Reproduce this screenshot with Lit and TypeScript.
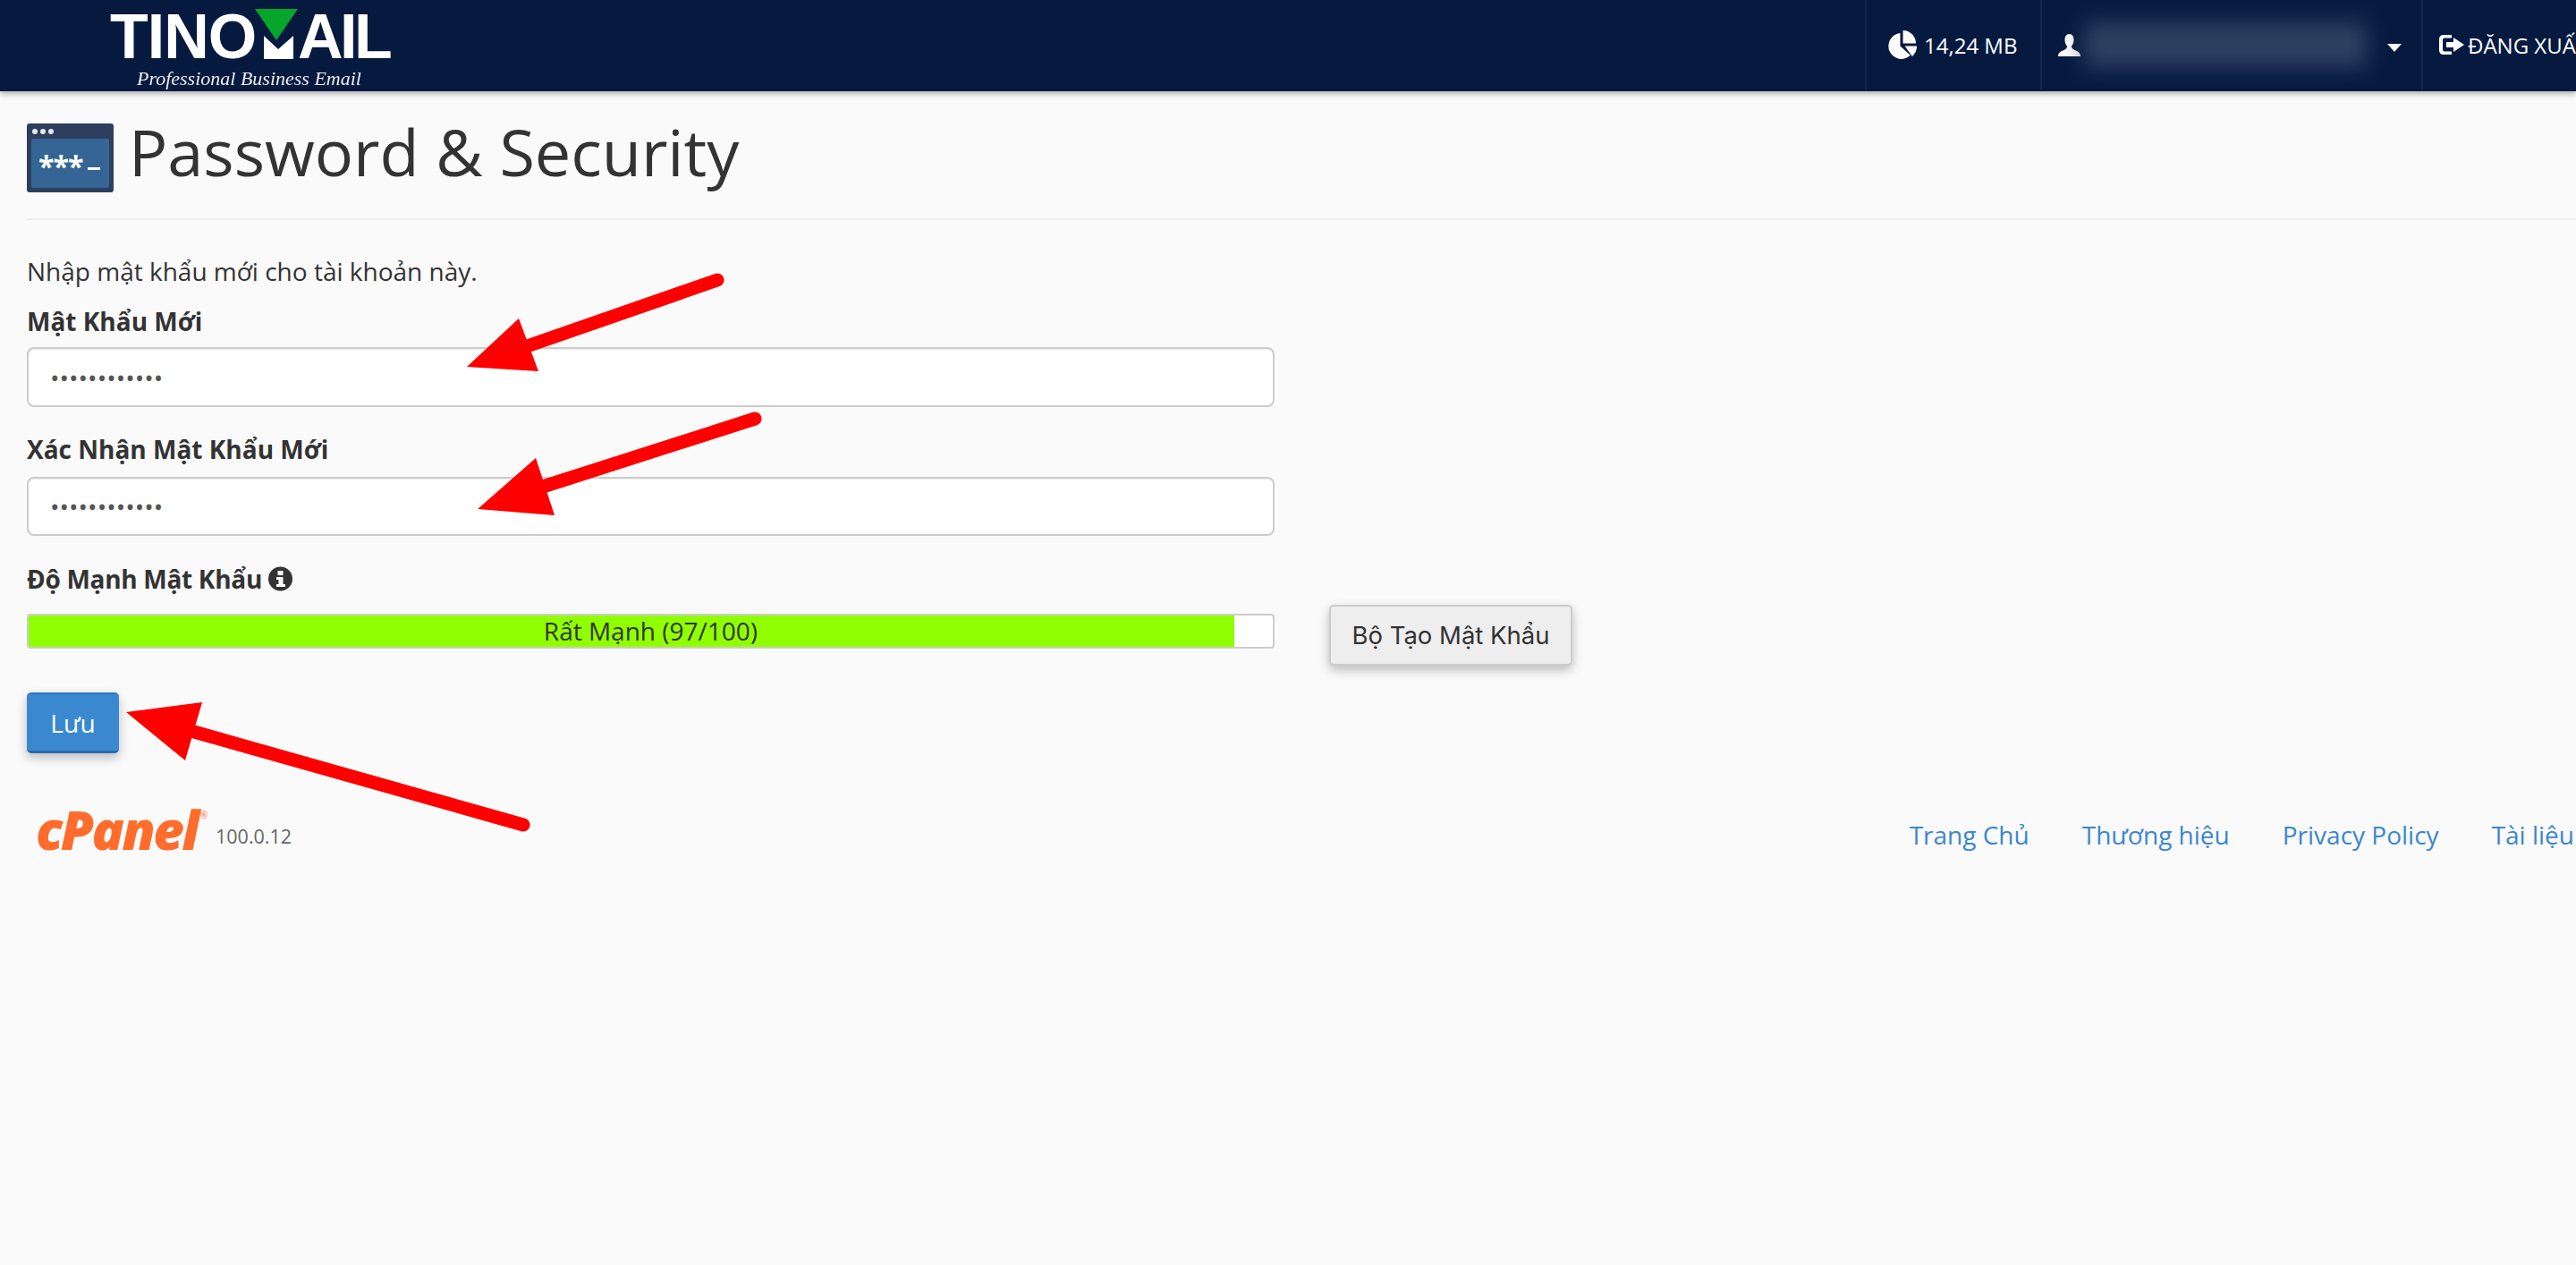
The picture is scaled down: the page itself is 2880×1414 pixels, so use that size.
import { LitElement, html, css } from "lit";
import { customElement } from "lit/decorators.js";

@customElement("app-root")
export class AppRoot extends LitElement {
  static styles = css`
    :host { display: block; width: 2880px; height: 1414px; overflow: hidden; position: relative; background: #fafafa; font-family: "Open Sans", sans-serif; color: #333; }
    * { box-sizing: border-box; }
    .top { height: 102px; background: #061a40; box-shadow: 0 3px 6px rgba(0,0,0,.3); display: flex; color: #fff; position: relative; }
    .logo { width: 2085px; flex: none; position: relative; padding: 0 0 0 123px; filter: blur(.7px); }
    .wordmark { display: flex; align-items: flex-start; height: 72px; font: bold 70px/70px "Liberation Sans", sans-serif; padding-top: 6px; }
    .wordmark span:first-child { width: 162px; letter-spacing: -1px; }
    .wordmark span:last-child { letter-spacing: -3.500px; margin-left: -2px; }
    .wordmark svg { width: 50px; height: 72px; margin-top: -6px; flex: none; }
    .tag { font: italic 22px/24px "Liberation Serif", serif; margin: 4px 0 0 30px; white-space: nowrap; color: #eee; }
    .cell { border-left: 2px solid #13264b; height: 100px; display: flex; align-items: center; font-size: 24px; white-space: nowrap; flex: none; overflow: hidden; }
    .cell svg { flex: none; }
    .usage { width: 196px; padding-left: 23px; gap: 8px; }
    .user { width: 426px; padding-left: 18px; }
    .blur { width: 316px; height: 50px; margin-left: 4px; background: #3a4b6c; filter: blur(12px); opacity: .8; flex: none; }
    .caret { margin-left: 23px; margin-top: 6px; }
    .logout { width: 173px; padding-left: 18px; gap: 4px; }
    .main { padding: 36px 0 0 30px; }
    .title { display: flex; align-items: center; gap: 17px; height: 77px; }
    .title svg { flex: none; }
    h1 { margin: 0; padding-bottom: 14px; font-size: 72px; font-weight: 400; line-height: 77px; white-space: nowrap; }
    .rule { height: 2px; background: #eee; margin-top: 29px; }
    .intro { font-size: 28px; line-height: 40px; margin-top: 37px; }
    .form { width: 1395px; }
    label { display: flex; align-items: center; gap: 8px; font-size: 28px; font-weight: 700; line-height: 40px; }
    .l1 { margin-top: 16px; }
    .l2 { margin-top: 27px; }
    .l3 { margin-top: 28px; gap: 7px; letter-spacing: -.3px; }
    input { display: block; width: 100%; height: 67px; margin-top: 9px; border: 2px solid #ccc; border-radius: 8px; background: #fff; padding: 0 24px; font: 28px "Open Sans", sans-serif; color: #555; outline: none; box-shadow: inset 0 1px 1px rgba(0,0,0,.075); }
    .l2 + input { height: 66px; margin-top: 11px; }
    .meter-row { display: flex; align-items: flex-start; margin-top: 9px; height: 68px; }
    .meter { width: 1395px; height: 39px; margin-top: 10px; flex: none; border: 2px solid #ccc; border-radius: 4px; background: #fff; display: grid; overflow: hidden; }
    .meter > * { grid-area: 1 / 1; }
    .fill { width: 96.9%; background: #90ff00; }
    .mtext { text-align: center; font-size: 28px; line-height: 35px; }
    .gen { margin-left: 61px; width: 272px; height: 68px; border: 2px solid #ccc; border-radius: 5px; background: #eee; color: #333; font: 27.5px Inter, sans-serif; box-shadow: 0 5px 12px rgba(0,0,0,.25); padding: 0; flex: none; white-space: nowrap; }
    .save { display: block; margin-top: 30px; width: 103px; height: 68px; border: 0; border-bottom: 3px solid #2a6cae; border-top: 2px solid #2f78bd; border-radius: 5px; background: #3a89d0; color: #fff; font: 28px "Open Sans", sans-serif; box-shadow: 0 5px 12px rgba(0,0,0,.25); padding: 0; }
    .foot { display: flex; justify-content: space-between; align-items: center; margin-top: 69px; height: 44px; padding-right: 2px; }
    .brand { display: flex; align-items: center; padding-left: 10px; }
    .cp { font: italic 800 60px/44px "Open Sans", sans-serif; color: #ff6c2c; letter-spacing: -2.500px; display: flex; align-items: flex-start; width: 197px; margin-bottom: 12px; }
    .cp sup { font: 400 10px/12px "Open Sans", sans-serif; margin: 0 0 0 3px; letter-spacing: 0; }
    .ver { font-size: 21.500px; color: #666; margin: 2px 0 0 4px; }
    .links { display: flex; gap: 59px; font-size: 28px; color: #3b87ce; white-space: nowrap; }
    .arrows { position: absolute; left: 0; top: 0; pointer-events: none; }
  `;

  render() {
    return html`
      <div class="top">
        <div class="logo">
          <div class="wordmark">
            <span>TINO</span>
            <svg viewBox="285 0 50 72">
              <polygon points="285,10 333,10 309,45" fill="#06a52c"/>
              <polygon points="295,40 311,55 328,40 328,66 295,66" fill="#fff"/>
            </svg>
            <span>AIL</span>
          </div>
          <div class="tag">Professional Business Email</div>
        </div>
        <div class="cell usage">
          <svg width="33" height="33" viewBox="0 0 32 32" fill="#fff">
            <path d="M14 3A14 14 0 1 0 25 27L14 17Z"/>
            <path d="M17 0A14 14 0 0 1 31 14H17Z"/>
            <path d="M19 17H32A14 14 0 0 1 27 28Z"/>
          </svg>
          <span>14,24 MB</span>
        </div>
        <div class="cell user">
          <svg width="25" height="25" viewBox="0 0 25 25" fill="#fff">
            <path d="M12.5 0C8.8 0 7.5 3 7.5 6.5c0 3 1 5.5 2.5 7 .3 2-1 3-3.500 4.500C3 19.500 0 20.500 0 25h25c0-4.500-3-5.500-6.500-7-2.500-1.500-3.800-2.500-3.500-4.500 1.500-1.500 2.500-4 2.500-7C17.500 3 16.200 0 12.500 0z"/>
          </svg>
          <div class="blur"></div>
          <svg class="caret" width="16" height="9" viewBox="0 0 16 9" fill="#fff"><polygon points="0,0 16,0 8,9"/></svg>
        </div>
        <div class="cell logout">
          <svg width="28" height="22" viewBox="0 0 28 22" fill="#fff">
            <path d="M5 0h9v3.500H6Q4 3.500 4 5.500v11q0 2 2 2h8V22H5q-5 0-5-5V5q0-5 5-5z"/>
            <path d="M8 8h8V3l12 8-12 8v-5H8z"/>
          </svg>
          <span>ĐĂNG XUẤT</span>
        </div>
      </div>

      <div class="main">
        <div class="title">
          <svg width="97" height="77" viewBox="0 0 97 77">
            <rect width="97" height="77" rx="3" fill="#2e3f5e"/>
            <circle cx="9" cy="9" r="3" fill="#e8e8e8"/><circle cx="18" cy="9" r="3" fill="#e8e8e8"/><circle cx="27" cy="9" r="3" fill="#e8e8e8"/>
            <rect x="5" y="17" width="87" height="55" rx="2" fill="#356594"/>
            <text x="13" y="60" fill="#fff" font-family="Open Sans" font-weight="700" font-size="32" letter-spacing="-1">***</text>
            <rect x="68" y="49" width="14" height="3" fill="#fff"/>
          </svg>
          <h1>Password &amp; Security</h1>
        </div>
        <div class="rule"></div>
        <div class="form">
          <div class="intro">Nhập mật khẩu mới cho tài khoản này.</div>
          <label class="l1">Mật Khẩu Mới</label>
          <input type="password" value="............" />
          <label class="l2">Xác Nhận Mật Khẩu Mới</label>
          <input type="password" value="............" />
          <label class="l3">Độ Mạnh Mật Khẩu
            <svg width="27" height="28" viewBox="0 0 27 28">
              <circle cx="13.500" cy="14" r="13.500" fill="#333"/>
              <rect x="10.500" y="5" width="6" height="5" fill="#fff"/>
              <path d="M9 12h7.500v8H19v3H9v-3h2.500v-5H9z" fill="#fff"/>
            </svg>
          </label>
          <div class="meter-row">
            <div class="meter">
              <div class="fill"></div>
              <div class="mtext">Rất Mạnh (97/100)</div>
            </div>
            <button class="gen">Bộ Tạo Mật Khẩu</button>
          </div>
          <button class="save">Lưu</button>
        </div>
        <div class="foot">
          <div class="brand">
            <div class="cp">cPanel<sup>®</sup></div>
            <span class="ver">100.0.12</span>
          </div>
          <div class="links">
            <span>Trang Chủ</span><span>Thương hiệu</span><span>Privacy Policy</span><span>Tài liệu</span>
          </div>
        </div>
      </div>

      <svg class="arrows" width="2880" height="1414" viewBox="0 0 2880 1414">
        <g stroke="#f00" stroke-width="15" stroke-linecap="round" fill="#f00">
          <line x1="592" y1="386" x2="802" y2="313"/>
          <line x1="610" y1="543" x2="844" y2="468"/>
          <line x1="217" y1="818" x2="585" y2="922"/>
        </g>
        <g fill="#f00">
          <polygon points="522,410 580,356 602,415"/>
          <polygon points="534,569 599,512 620,576"/>
          <polygon points="141,796 226,785 207,850"/>
        </g>
      </svg>
    `;
  }
}
